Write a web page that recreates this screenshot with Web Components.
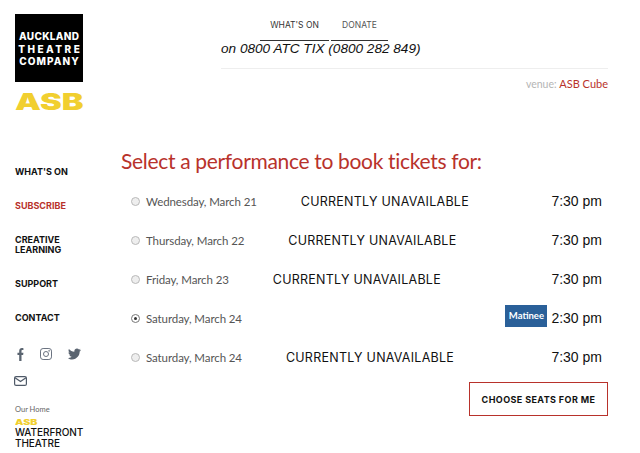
<!DOCTYPE html>
<html>
<head>
<meta charset="utf-8">
<title>Select a performance</title>
<style>
  html, body { margin: 0; background: #fff; }
  body { width: 640px; height: 453px; overflow: hidden; display: grid; grid-template-columns: 121px 1fr; }
</style>
</head>
<body>
<atc-sidebar></atc-sidebar>
<atc-main>
  <atc-topbar></atc-topbar>
  <perf-row date="Wednesday, March 21" time="7:30 pm" status="CURRENTLY UNAVAILABLE"></perf-row>
  <perf-row date="Thursday, March 22" time="7:30 pm" status="CURRENTLY UNAVAILABLE"></perf-row>
  <perf-row date="Friday, March 23" time="7:30 pm" status="CURRENTLY UNAVAILABLE"></perf-row>
  <perf-row date="Saturday, March 24" time="2:30 pm" badge="Matinee" checked></perf-row>
  <perf-row date="Saturday, March 24" time="7:30 pm" status="CURRENTLY UNAVAILABLE"></perf-row>
  <atc-button>CHOOSE SEATS FOR ME</atc-button>
</atc-main>
<script>
class AtcSidebar extends HTMLElement {
    constructor() {
        super();
        this.shadowDOM = this.attachShadow({mode: "open"});
    }
    connectedCallback() {
        this.shadowDOM.innerHTML = `
            <style>
            :host { display: block; padding: 14px 0 0 15px; font-family: Inter, "Liberation Sans", sans-serif; }
            .logo {
                width: 68px; height: 68px; background: #000; color: #fff; box-sizing: border-box;
                display: flex; flex-direction: column; align-items: center; justify-content: center;
                font-size: 10px; font-weight: 800; line-height: 12.5px; padding-top: 2px;
            }
            .logo .a { letter-spacing: .3px; margin-right: -.3px; }
            .logo .t { letter-spacing: 2.5px; margin-right: -2.5px; }
            .logo .c { letter-spacing: 1.1px; margin-right: -1.1px; }
            .asb {
                margin-top: 10px; height: 21px; width: 50px; color: #f1cf2f; font-size: 23px; font-weight: 900;
                line-height: 21px; transform: scaleX(1.42); transform-origin: left center; white-space: nowrap;
            }
            nav { margin-top: 54px; display: flex; flex-direction: column; font-size: 9px; font-weight: 700; line-height: 10px; color: #111; }
            nav a { display: block; margin-bottom: 24px; }
            nav a.red { color: #b8322b; }
            .social { margin-top: 20px; display: flex; gap: 15px; align-items: center; height: 16px; padding: 3px 0 0 1px; }
            .mail { margin-top: 14px; height: 14px; margin-left: -1px; }
            svg { display: block; }
            .home { margin-top: 15px; font: 400 7.5px/10px Lato, sans-serif; color: #666; }
            .asb2 {
                margin-top: 4px; height: 8px; width: 16px; color: #f1cf2f; font-size: 7.5px; font-weight: 900; line-height: 8px;
                transform: scaleX(1.42); transform-origin: left center;
            }
            .wt { font-size: 10px; font-weight: 500; line-height: 11px; color: #111; letter-spacing: -.05px; }
            </style>
            <div class="logo"><span class="a">AUCKLAND</span><span class="t">THEATRE</span><span class="c">COMPANY</span></div>
            <div class="asb">ASB</div>
            <nav>
                <a>WHAT'S ON</a>
                <a class="red">SUBSCRIBE</a>
                <a>CREATIVE<br>LEARNING</a>
                <a>SUPPORT</a>
                <a style="margin-bottom:0">CONTACT</a>
            </nav>
            <div class="social">
                <svg width="9" height="13" viewBox="1.500 .5 6.500 13.500"><path fill="#5a6470" d="M3.400 14V7.700H1.600V5.400h1.800V3.700C3.400 1.600 4.500.6 6.300.6c.7 0 1.200 0 1.500.1v2H6.800c-.8 0-1 .4-1 1v1.700h2l-.3 2.300H5.800V14z"/></svg>
                <svg width="12" height="12" viewBox="0 0 12 12" fill="none" stroke="#6a7280"><rect x=".5" y=".5" width="11" height="11" rx="2.600"/><circle cx="6" cy="6" r="2.500"/><circle cx="9.100" cy="2.900" r=".4"/></svg>
                <svg style="margin-left:1px" width="13" height="12" viewBox="0 0 24 20"><path fill="#5a6470" d="M24 2.400c-.9.400-1.800.7-2.800.8 1-.6 1.800-1.600 2.200-2.700-1 .6-2 1-3.100 1.200C19.300.7 18 0 16.600 0c-2.700 0-4.900 2.200-4.900 4.900 0 .4 0 .8.100 1.100C7.700 5.800 4.100 3.800 1.700.9 1.200 1.600 1 2.500 1 3.400c0 1.700.9 3.200 2.200 4.100-.8 0-1.600-.2-2.200-.6v.1c0 2.400 1.700 4.400 3.900 4.800-.4.100-.8.200-1.300.2-.3 0-.6 0-.9-.1.600 2 2.400 3.400 4.600 3.400-1.700 1.300-3.800 2.100-6.100 2.100-.4 0-.8 0-1.200-.1C2.200 19.300 4.800 20 7.500 20c9.100 0 14-7.500 14-14v-.6c1-.7 1.800-1.600 2.500-3z"/></svg>
            </div>
            <div class="mail">
                <svg width="13" height="10" viewBox="0 0 13 10" fill="none" stroke="#4f5a68" stroke-width="1.200"><rect x=".6" y=".6" width="11.800" height="8.800" rx="1.500"/><path d="M1 1.800l5.500 3.800L12 1.800"/></svg>
            </div>
            <div class="home">Our Home</div>
            <div class="asb2">ASB</div>
            <div class="wt">WATERFRONT<br>THEATRE</div>
        `;
    }
}

class AtcMain extends HTMLElement {
    constructor() {
        super();
        this.shadowDOM = this.attachShadow({mode: "open"});
    }
    connectedCallback() {
        this.shadowDOM.innerHTML = `
            <style>
            :host { display: block; padding-right: 32px; }
            h1 { margin: 0 0 7px; font: 400 21px/28px Lato, sans-serif; letter-spacing: -.32px; color: #b8322b; white-space: nowrap; }
            .rows { display: flex; flex-direction: column; }
            </style>
            <slot name="top"></slot>
            <h1>Select a performance to book tickets for:</h1>
            <div class="rows"><slot></slot></div>
        `;
        this.querySelector("atc-topbar").slot = "top";
    }
}

class AtcTopbar extends HTMLElement {
    constructor() {
        super();
        this.shadowDOM = this.attachShadow({mode: "open"});
    }
    connectedCallback() {
        this.shadowDOM.innerHTML = `
            <style>
            :host { display: block; height: 147px; padding: 19px 0 0 100px; box-sizing: border-box; }
            nav { display: flex; gap: 2px; margin-left: 39px; height: 23px; font: 400 8.5px/13px Inter, sans-serif; color: #333; }
            nav a { border-bottom: 1px solid #333; height: 22px; text-align: center; box-sizing: border-box; }
            nav a:first-child { width: 69px; }
            nav a:last-child { width: 57px; color: #555; }
            .phone { margin-top: -2px; font: italic 13.6px/17px "Liberation Sans", sans-serif; color: #111; height: 21px; white-space: nowrap; position: relative; }
            hr { border: 0; border-top: 1px solid #eee; margin: 7px 0 0; }
            .venue { margin-top: 8px; text-align: right; font: 400 10.5px/14px Lato, sans-serif; color: #b5b5b5; }
            .venue b { font-weight: 400; color: #b8322b; font-size: 11px; }
            </style>
            <nav><a>WHAT'S ON</a><a>DONATE</a></nav>
            <div class="phone">on 0800 ATC TIX (0800 282 849)</div>
            <hr>
            <div class="venue">venue: <b>ASB Cube</b></div>
        `;
    }
}

class PerfRow extends HTMLElement {
    constructor() {
        super();
        this.shadowDOM = this.attachShadow({mode: "open"});
    }
    connectedCallback() {
        const badge = this.getAttribute("badge");
        const status = this.getAttribute("status");
        const checked = this.hasAttribute("checked");
        this.shadowDOM.innerHTML = `
            <style>
            :host { display: flex; align-items: center; height: 39px; padding: 0 6px 0 10px; }
            .radio {
                width: 9px; height: 9px; border-radius: 50%; border: 1px solid #b9b9b9; background: #eee;
                box-sizing: border-box; margin-right: 6px; flex: none;
                display: flex; align-items: center; justify-content: center;
            }
            .radio.on { background: #fff; border-color: #777; }
            .radio.on::after { content: ""; width: 3px; height: 3px; border-radius: 50%; background: #333; }
            .date { font: 400 11.5px/16px Lato, sans-serif; letter-spacing: -.1px; color: #555; white-space: nowrap; }
            .status { margin-left: 44px; font: 400 12.5px/16px Inter, sans-serif; color: #111; white-space: nowrap; letter-spacing: .25px; }
            .spacer { flex: 1; }
            .badge { background: #2a6099; color: #fff; font: 700 9.5px/22px Lato, sans-serif; height: 22px; width: 42px; text-align: center; margin-right: 4px; margin-top: -6px; }
            .time { font: 14px/17px "Liberation Sans", sans-serif; color: #111; white-space: nowrap; }
            </style>
            <span class="radio ${checked ? "on" : ""}"></span>
            <span class="date">${this.getAttribute("date")}</span>
            ${status ? `<span class="status">${status}</span>` : ""}
            <span class="spacer"></span>
            ${badge ? `<span class="badge">${badge}</span>` : ""}
            <span class="time">${this.getAttribute("time")}</span>
        `;
    }
}

class AtcButton extends HTMLElement {
    constructor() {
        super();
        this.shadowDOM = this.attachShadow({mode: "open"});
    }
    connectedCallback() {
        this.shadowDOM.innerHTML = `
            <style>
            :host { display: flex; justify-content: flex-end; margin-top: 5px; }
            button {
                width: 139px; height: 34px; padding: 0; background: #fff; border: 1.5px solid #b8322b; border-radius: 0;
                font: 700 9px/1 Inter, sans-serif; letter-spacing: .4px; color: #111; white-space: nowrap;
            }
            </style>
            <button><slot></slot></button>
        `;
    }
}

customElements.define("atc-sidebar", AtcSidebar);
customElements.define("atc-main", AtcMain);
customElements.define("atc-topbar", AtcTopbar);
customElements.define("perf-row", PerfRow);
customElements.define("atc-button", AtcButton);
</script>
</body>
</html>
